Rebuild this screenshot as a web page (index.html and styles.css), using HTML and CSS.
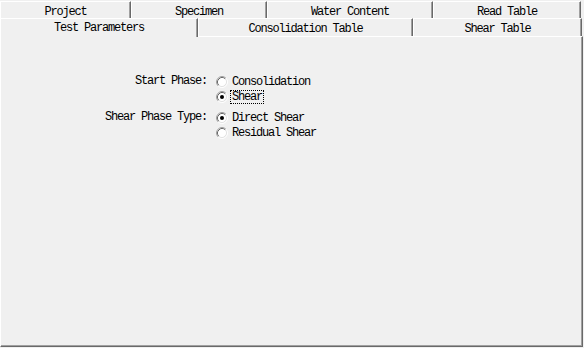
FILE: index.html
```html
<!DOCTYPE html>
<html>
<head>
<meta charset="utf-8">
<link rel="stylesheet" href="styles.css">
</head>
<body>
<div class="tabctl">
  <div class="tabrow row1">
    <div class="tab w131">Project</div>
    <div class="tab w136">Specimen</div>
    <div class="tab w166">Water Content</div>
    <div class="tab w148">Read Table</div>
  </div>
  <div class="tabrow row2">
    <div class="tab sel w198">Test Parameters</div>
    <div class="tab w215">Consolidation Table</div>
    <div class="tab w169">Shear Table</div>
  </div>
  <div class="panel">
    <div class="form">
      <div class="label">Start Phase:</div>
      <div class="group">
        <div class="opt">
          <svg class="radio" width="12" height="12" viewBox="0 0 12 12">
            <circle cx="6" cy="6" r="4.5" fill="#fff"/>
            <path d="M2.11 9.89A5.5 5.5 0 0 1 9.89 2.11" fill="none" stroke="#a0a0a0"/>
            <path d="M9.89 2.11A5.5 5.5 0 0 1 2.11 9.89" fill="none" stroke="#fff"/>
            <path d="M2.82 9.18A4.5 4.5 0 0 1 9.18 2.82" fill="none" stroke="#696969"/>
            <path d="M9.18 2.82A4.5 4.5 0 0 1 2.82 9.18" fill="none" stroke="#e3e3e3"/>
          </svg>
          <span class="txt">Consolidation</span>
        </div>
        <div class="opt">
          <svg class="radio" width="12" height="12" viewBox="0 0 12 12">
            <circle cx="6" cy="6" r="4.5" fill="#fff"/>
            <path d="M2.11 9.89A5.5 5.5 0 0 1 9.89 2.11" fill="none" stroke="#a0a0a0"/>
            <path d="M9.89 2.11A5.5 5.5 0 0 1 2.11 9.89" fill="none" stroke="#fff"/>
            <path d="M2.82 9.18A4.5 4.5 0 0 1 9.18 2.82" fill="none" stroke="#696969"/>
            <path d="M9.18 2.82A4.5 4.5 0 0 1 2.82 9.18" fill="none" stroke="#e3e3e3"/>
            <circle cx="6" cy="6" r="2" fill="#000"/>
          </svg>
          <span class="txt focus">Shear</span>
        </div>
      </div>
      <div class="label">Shear Phase Type:</div>
      <div class="group">
        <div class="opt">
          <svg class="radio" width="12" height="12" viewBox="0 0 12 12">
            <circle cx="6" cy="6" r="4.5" fill="#fff"/>
            <path d="M2.11 9.89A5.5 5.5 0 0 1 9.89 2.11" fill="none" stroke="#a0a0a0"/>
            <path d="M9.89 2.11A5.5 5.5 0 0 1 2.11 9.89" fill="none" stroke="#fff"/>
            <path d="M2.82 9.18A4.5 4.5 0 0 1 9.18 2.82" fill="none" stroke="#696969"/>
            <path d="M9.18 2.82A4.5 4.5 0 0 1 2.82 9.18" fill="none" stroke="#e3e3e3"/>
            <circle cx="6" cy="6" r="2" fill="#000"/>
          </svg>
          <span class="txt">Direct Shear</span>
        </div>
        <div class="opt">
          <svg class="radio" width="12" height="12" viewBox="0 0 12 12">
            <circle cx="6" cy="6" r="4.5" fill="#fff"/>
            <path d="M2.11 9.89A5.5 5.5 0 0 1 9.89 2.11" fill="none" stroke="#a0a0a0"/>
            <path d="M9.89 2.11A5.5 5.5 0 0 1 2.11 9.89" fill="none" stroke="#fff"/>
            <path d="M2.82 9.18A4.5 4.5 0 0 1 9.18 2.82" fill="none" stroke="#696969"/>
            <path d="M9.18 2.82A4.5 4.5 0 0 1 2.82 9.18" fill="none" stroke="#e3e3e3"/>
          </svg>
          <span class="txt">Residual Shear</span>
        </div>
      </div>
    </div>
  </div>
</div>
</body>
</html>
```
FILE: styles.css
```css
html, body {
  margin: 0;
  padding: 0;
  background: #f0f0f0;
}
body {
  width: 584px;
  height: 348px;
  overflow: hidden;
  font-family: "Liberation Mono", "DejaVu Sans Mono", monospace;
  font-size: 12px;
  letter-spacing: -1.2px;
  color: #000;
}
.tabctl {
  width: 584px;
  height: 348px;
  display: flex;
  flex-direction: column;
}
.tabrow {
  display: flex;
}
.row1 {
  height: 17px;
  margin-top: 1px;
}
.row2 {
  height: 18px;
  position: relative;
  z-index: 1;
}
.tab {
  box-sizing: border-box;
  height: 100%;
  border-top: 1px solid #fff;
  border-left: 1px solid #fff;
  border-right: 1px solid #696969;
  box-shadow: inset -1px 0 #a0a0a0;
  background: #f0f0f0;
  text-align: center;
  line-height: 12px;
  white-space: nowrap;
}
.row1 .tab {
  padding-top: 4px;
}
.row2 .tab {
  padding-top: 4px;
}
.row2 .sel {
  height: 19px;
  padding-top: 3px;
}
.w131 { width: 131px; }
.w136 { width: 136px; }
.w166 { width: 166px; }
.w148 { width: 148px; }
.w198 { width: 198px; }
.w215 { width: 215px; }
.w169 { width: 169px; }
.panel {
  box-sizing: border-box;
  width: 583px;
  flex: 1;
  border-top: 1px solid #fff;
  border-left: 1px solid #fff;
  border-right: 1px solid #696969;
  border-bottom: 1px solid #696969;
  box-shadow: inset -1px -1px #a0a0a0;
  margin-bottom: 1px;
}
.form {
  display: grid;
  grid-template-columns: 102px auto;
  column-gap: 9px;
  row-gap: 6px;
  margin-left: 104px;
  margin-top: 37px;
  align-items: start;
}
.label {
  text-align: right;
  line-height: 15px;
  height: 15px;
  white-space: nowrap;
}
.group {
  display: flex;
  flex-direction: column;
}
.opt {
  display: flex;
  align-items: center;
  height: 15px;
  gap: 2px;
}
.radio {
  flex: none;
  display: block;
}
.txt {
  border: 1px dotted transparent;
  padding: 0 1px;
  line-height: 12px;
  white-space: nowrap;
}
.focus {
  border-color: #000;
}
```
